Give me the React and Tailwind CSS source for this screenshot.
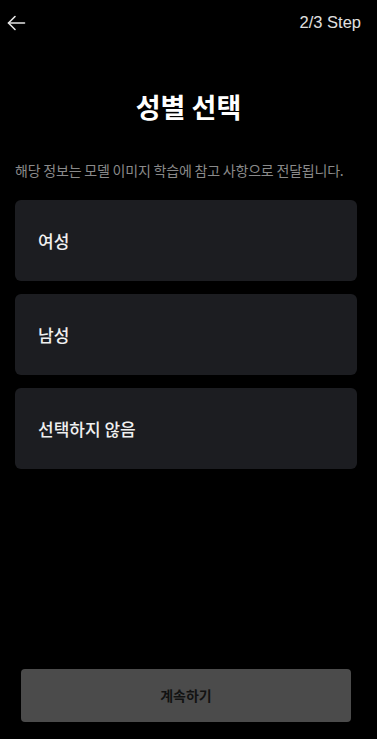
import React, { useState } from 'react';

const options = ['여성', '남성', '선택하지 않음'];

const App = () => {
  const [selected, setSelected] = useState(null);

  return (
    <div
      className="w-[377px] h-[739px] bg-black text-white flex flex-col"
      style={{ fontFamily: '"Noto Sans CJK KR", "Noto Sans", sans-serif' }}
    >
      {/* Header */}
      <div className="flex items-center justify-between pl-[6px] pr-[16px] pt-[11px] h-[34px]">
        <svg width="20" height="20" viewBox="0 0 20 20" fill="none" stroke="#e5e5e5" strokeWidth="1.6" strokeLinecap="round" strokeLinejoin="round">
          <path d="M18.5 10H2.5" />
          <path d="M9 3.5L2.5 10L9 16.5" />
        </svg>
        <span className="text-[16.5px] text-[#e0e0e0]" style={{ fontFamily: '"Liberation Sans", Arial, sans-serif' }}>2/3 Step</span>
      </div>

      {/* Title */}
      <h1 className="mt-[55px] text-center text-[27px] font-bold leading-[36px]">성별 선택</h1>
      <p className="mt-[35px] px-[15px] text-[14px] text-[#8a8a8a] leading-[20px] tracking-[-0.2px] whitespace-nowrap">
        해당 정보는 모델 이미지 학습에 참고 사항으로 전달됩니다.
      </p>

      {/* Options */}
      <div className="mt-[20px] pl-[15px] pr-[20px] flex flex-col gap-[13px]">
        {options.map((o, i) => (
          <button
            key={o}
            onClick={() => setSelected(i)}
            className={`h-[81px] rounded-[6px] bg-[#1c1d21] text-left pl-[23px] text-[17px] font-medium text-[#f0f0f0] ${
              selected === i ? 'ring-1 ring-white' : ''
            }`}
          >
            {o}
          </button>
        ))}
      </div>

      {/* Continue */}
      <div className="mt-auto pl-[21px] pr-[26px] pb-[17px]">
        <button className="w-full h-[53px] rounded-[4px] bg-[#4b4b4b] text-[14px] font-bold text-[#121212]">
          계속하기
        </button>
      </div>
    </div>
  );
};

export default App;
